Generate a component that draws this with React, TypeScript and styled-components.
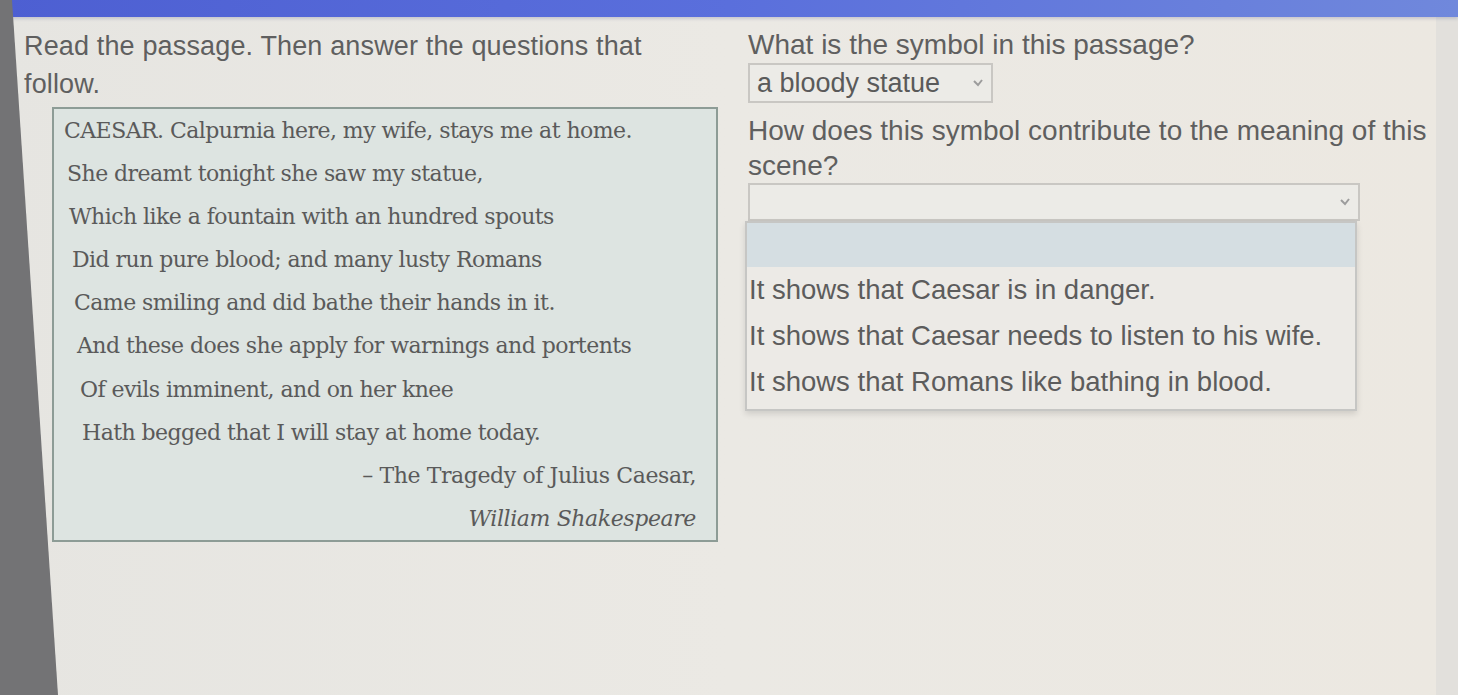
import styled, { createGlobalStyle } from "styled-components";

const GlobalStyle = createGlobalStyle`
  html, body {
    margin: 0;
    padding: 0;
    background: #e9e7e2;
  }
`;

const Page = styled.div`
  position: relative;
  width: 1458px;
  height: 695px;
  overflow: hidden;
  background: linear-gradient(90deg, #e6e5e1 0%, #ebe9e4 50%, #ece8e1 98.5%, #e2e0dc 98.5%);
  font-family: "Liberation Sans", Arial, sans-serif;
  color: #5e5e5e;

  /* dark monitor bezel along the left edge */
  &::before {
    content: "";
    position: absolute;
    left: 0;
    top: 0;
    bottom: 0;
    width: 64px;
    background: #737375;
    clip-path: polygon(0 0, 12px 0, 58px 100%, 0 100%);
  }
`;

const TopBar = styled.div`
  height: 17px;
  background: linear-gradient(90deg, #4d5fd2 0%, #5a6fdc 50%, #7088dc 100%);
  box-shadow: 0 2px 3px rgba(60, 70, 120, 0.2);
`;

const Columns = styled.div`
  display: grid;
  grid-template-columns: 694px 1fr;
  column-gap: 30px;
  padding: 10px 0 0 24px;
`;

const LeftColumn = styled.div`
  display: flex;
  flex-direction: column;
`;

const RightColumn = styled.div`
  display: flex;
  flex-direction: column;
`;

const Prompt = styled.p`
  margin: 0;
  font-size: 27px;
  line-height: 38px;
  letter-spacing: 0.15px;
  color: #5f5f5f;
`;

const Passage = styled.div`
  margin: 4px 0 0 28px;
  width: 666px;
  height: 435px;
  box-sizing: border-box;
  background: #dde4e1;
  border: 2px solid #8d9c96;
  padding: 0 20px 0 10px;
  font-family: "DejaVu Serif", Georgia, serif;
  font-size: 22px;
  color: #5a5a5a;
  display: flex;
  flex-direction: column;
`;

const Line = styled.div<{ $indent?: number }>`
  height: 43.3px;
  line-height: 43px;
  letter-spacing: -0.55px;
  padding-left: ${(p) => p.$indent ?? 0}px;
  white-space: nowrap;
`;

const Credit = styled.div<{ $italic?: boolean }>`
  height: 43.3px;
  line-height: 43px;
  text-align: right;
  letter-spacing: -0.4px;
  font-style: ${(p) => (p.$italic ? "italic" : "normal")};
`;

const Question = styled.p`
  margin: 0;
  font-size: 28px;
  line-height: 36px;
  letter-spacing: 0;
  color: #5f5f5f;
`;

const Select = styled.div<{ $width: number }>`
  width: ${(p) => p.$width}px;
  height: 40px;
  box-sizing: border-box;
  border: 2px solid #c9c7c3;
  background: #ecebe7;
  display: flex;
  align-items: center;
  justify-content: space-between;
  padding: 0 6px 0 7px;
  font-size: 27px;
  letter-spacing: 0;
  color: #5a5a5a;
`;

const Chevron = () => (
  <svg width="14" height="12" viewBox="0 0 14 12">
    <polyline points="3,4 7,8 11,3" fill="none" stroke="#9c9c9c" strokeWidth="2" />
  </svg>
);

const Menu = styled.div`
  width: 612px;
  margin-left: -3px;
  box-sizing: border-box;
  border: 2px solid #c6c6c4;
  background: #eceae6;
  box-shadow: 0 3px 6px rgba(0, 0, 0, 0.12);
  padding-bottom: 4px;
`;

const Option = styled.div<{ $active?: boolean }>`
  height: ${(p) => (p.$active ? 44 : 46)}px;
  line-height: ${(p) => (p.$active ? 44 : 46)}px;
  padding-left: 2px;
  font-size: 27.5px;
  letter-spacing: 0;
  color: #5c5c5c;
  background: ${(p) => (p.$active ? "#d5dee2" : "transparent")};
  white-space: nowrap;
`;

const passage = [
  "CAESAR. Calpurnia here, my wife, stays me at home.",
  "She dreamt tonight she saw my statue,",
  "Which like a fountain with an hundred spouts",
  "Did run pure blood; and many lusty Romans",
  "Came smiling and did bathe their hands in it.",
  "And these does she apply for warnings and portents",
  "Of evils imminent, and on her knee",
  "Hath begged that I will stay at home today.",
];

const answers = [
  "It shows that Caesar is in danger.",
  "It shows that Caesar needs to listen to his wife.",
  "It shows that Romans like bathing in blood.",
];

export default function App() {
  return (
    <>
      <GlobalStyle />
      <Page>
        <TopBar />
        <Columns>
          <LeftColumn>
            <Prompt>
              Read the passage. Then answer the questions that
              <br />
              follow.
            </Prompt>
            <Passage>
              {passage.map((text, i) => (
                <Line key={i} $indent={Math.round(i * 2.6)}>
                  {text}
                </Line>
              ))}
              <Credit>– The Tragedy of Julius Caesar,</Credit>
              <Credit $italic>William Shakespeare</Credit>
            </Passage>
          </LeftColumn>

          <RightColumn>
            <Question>What is the symbol in this passage?</Question>
            <Select $width={245}>
              <span>a bloody statue</span>
              <Chevron />
            </Select>
            <Question style={{ marginTop: 10, lineHeight: "35px" }}>
              How does this symbol contribute to the meaning of this
              <br />
              scene?
            </Question>
            <Select $width={612} style={{ height: 38 }}>
              <span />
              <Chevron />
            </Select>
            <Menu>
              <Option $active />
              {answers.map((a) => (
                <Option key={a}>{a}</Option>
              ))}
            </Menu>
          </RightColumn>
        </Columns>
      </Page>
    </>
  );
}
